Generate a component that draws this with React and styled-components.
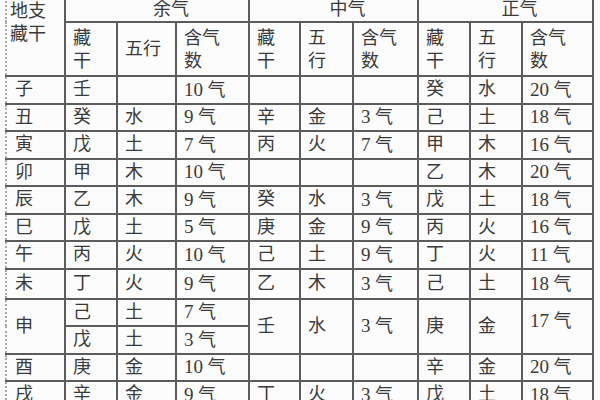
import React from "react";
import styled, { createGlobalStyle } from "styled-components";

const GlobalStyle = createGlobalStyle`
  html, body {
    margin: 0;
    padding: 0;
    background: #fcfcfc;
    overflow: hidden;
  }
  body {
    font-family: "Liberation Serif", "Noto Sans CJK SC", serif;
    color: #3a3a3a;
  }
`;

const COLS = [59, 52, 59, 73, 51, 53, 65, 52, 52, 71];

const ROWS = [
  { branch: "子", yu: [["壬", "", "10"]], zhong: ["", "", ""], zheng: ["癸", "水", "20"] },
  { branch: "丑", yu: [["癸", "水", "9"]], zhong: ["辛", "金", "3"], zheng: ["己", "土", "18"] },
  { branch: "寅", yu: [["戊", "土", "7"]], zhong: ["丙", "火", "7"], zheng: ["甲", "木", "16"] },
  { branch: "卯", yu: [["甲", "木", "10"]], zhong: ["", "", ""], zheng: ["乙", "木", "20"] },
  { branch: "辰", yu: [["乙", "木", "9"]], zhong: ["癸", "水", "3"], zheng: ["戊", "土", "18"] },
  { branch: "巳", yu: [["戊", "土", "5"]], zhong: ["庚", "金", "9"], zheng: ["丙", "火", "16"] },
  { branch: "午", yu: [["丙", "火", "10"]], zhong: ["己", "土", "9"], zheng: ["丁", "火", "11"] },
  { branch: "未", yu: [["丁", "火", "9"]], zhong: ["乙", "木", "3"], zheng: ["己", "土", "18"], height: 30 },
  {
    branch: "申",
    yu: [
      ["己", "土", "7"],
      ["戊", "土", "3"],
    ],
    zhong: ["壬", "水", "3"],
    zheng: ["庚", "金", "17"],
    raised: true,
  },
  { branch: "酉", yu: [["庚", "金", "10"]], zhong: ["", "", ""], zheng: ["辛", "金", "20"] },
  { branch: "戌", yu: [["辛", "金", "9"]], zhong: ["丁", "火", "3"], zheng: ["戊", "土", "18"] },
];

const Qi = ({ n }) =>
  n ? (
    <>
      <Num>{n}</Num> 气
    </>
  ) : null;

const Triple = ({ data, rowSpan, raised }) => (
  <>
    <Cell rowSpan={rowSpan}>{data[0]}</Cell>
    <Cell rowSpan={rowSpan}>{data[1]}</Cell>
    <Cell rowSpan={rowSpan} $raised={raised}>
      <Qi n={data[2]} />
    </Cell>
  </>
);

const HeadTriple = ({ narrow }) => (
  <>
    <HeadCell>
      藏<br />干
    </HeadCell>
    <HeadCell>
      {narrow ? (
        <>
          五<br />行
        </>
      ) : (
        "五行"
      )}
    </HeadCell>
    <HeadCell>
      含气<br />数
    </HeadCell>
  </>
);

const App = () => {
  return (
    <>
      <GlobalStyle />
      <Page>
        <Table>
          <colgroup>
            {COLS.map((w, i) => (
              <col key={i} style={{ width: w }} />
            ))}
          </colgroup>
          <thead>
            <Row $h={25}>
              <CornerCell rowSpan={2}>
                地支<br />藏干
              </CornerCell>
              <GroupCell colSpan={3}>余气</GroupCell>
              <GroupCell colSpan={3}>中气</GroupCell>
              <GroupCell colSpan={3}>正气</GroupCell>
            </Row>
            <Row $h={54}>
              <HeadTriple />
              <HeadTriple narrow />
              <HeadTriple narrow />
            </Row>
          </thead>
          <tbody>
            {ROWS.map((r) => {
              const span = r.yu.length;
              return (
                <React.Fragment key={r.branch}>
                  <Row $h={r.height || 27.5}>
                    <BranchCell rowSpan={span}>{r.branch}</BranchCell>
                    <Triple data={r.yu[0]} />
                    <Triple data={r.zhong} rowSpan={span} />
                    <Triple data={r.zheng} rowSpan={span} raised={r.raised} />
                  </Row>
                  {r.yu.slice(1).map((sub, i) => (
                    <Row key={i} $h={27.5}>
                      <Triple data={sub} />
                    </Row>
                  ))}
                </React.Fragment>
              );
            })}
          </tbody>
        </Table>
      </Page>
    </>
  );
};

App.displayName = "App";

export default App;

const Page = styled.div`
  padding-left: 5px;
  height: 400px;
  overflow: hidden;
`;

const Table = styled.table`
  margin-top: -4px;
  border-collapse: collapse;
  table-layout: fixed;
  width: 589px;
  font-size: 18px;
  line-height: 23px;
`;

const Row = styled.tr`
  height: ${(p) => p.$h}px;
`;

const Cell = styled.td`
  border: 2px solid #5c5c5c;
  padding: ${(p) => (p.$raised ? "0 2px 10px 7px" : "0 2px 0 7px")};
  vertical-align: middle;
  text-align: left;
  white-space: nowrap;
  overflow: hidden;
`;

const Num = styled.span`
  font-size: 19px;
`;

const BranchCell = styled(Cell)`
  border-left: 2px dotted #a8a8a8;
  padding-left: 8px;
`;

const HeadCell = styled(Cell)`
  padding-top: 1px;
`;

const CornerCell = styled(Cell)`
  border-left: 2px dotted #a8a8a8;
  vertical-align: top;
  padding: 2px 0 0 3px;
`;

const GroupCell = styled(Cell)`
  text-align: center;
  padding: 0 0 0 28px;
`;
